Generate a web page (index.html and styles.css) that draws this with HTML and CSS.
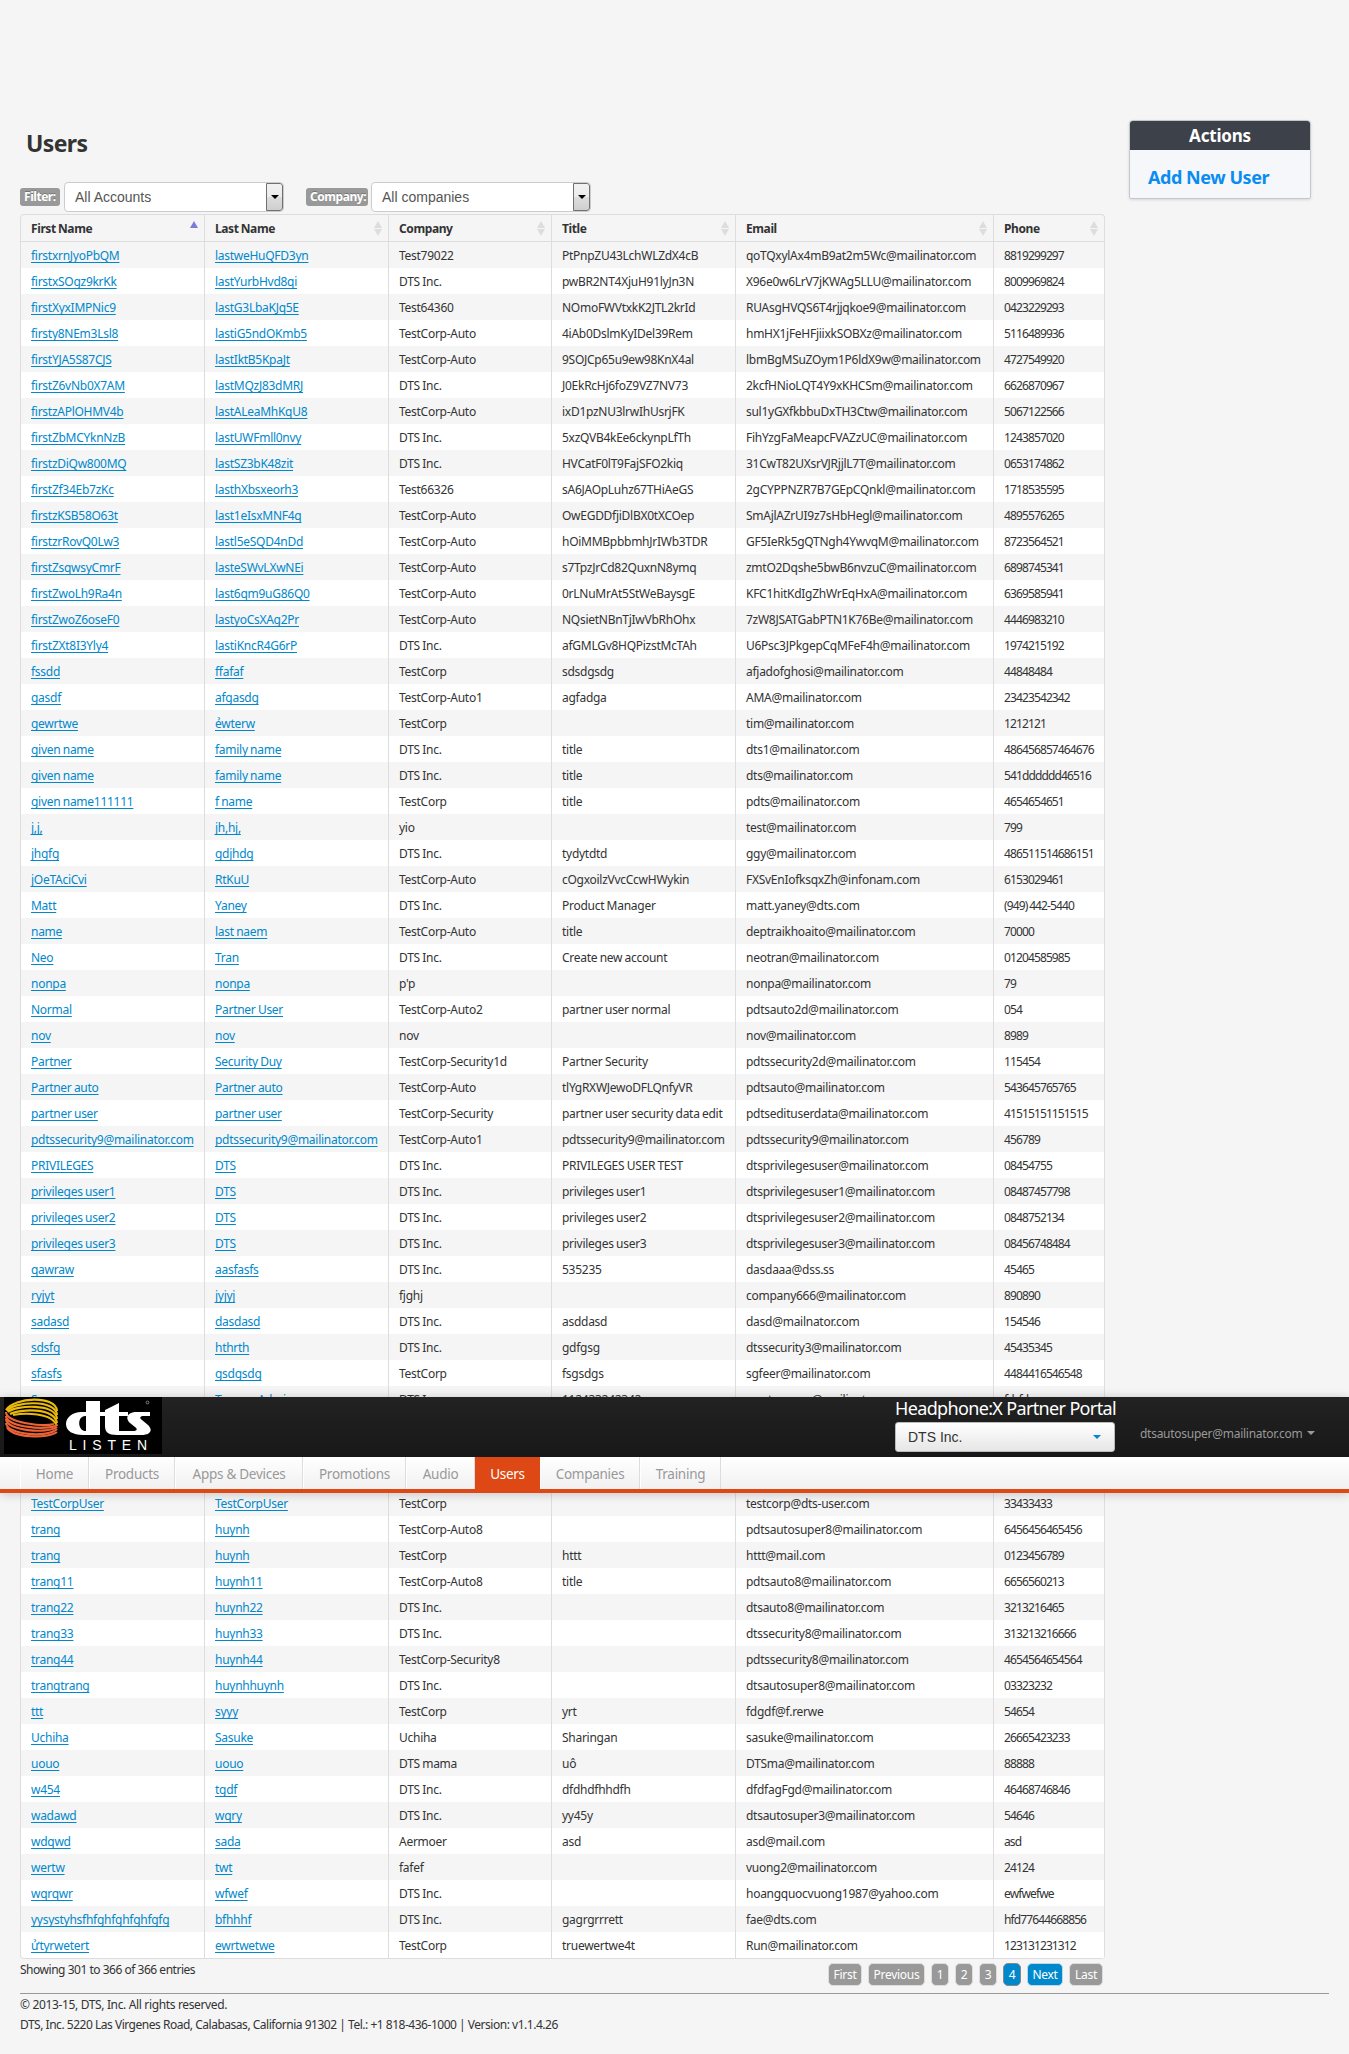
FILE: index.html
```html
<!DOCTYPE html>
<html lang="en">
<head>
<meta charset="utf-8">
<title>Users - Headphone:X Partner Portal</title>
<link rel="stylesheet" href="styles.css">
</head>
<body>
<header class="site-header">
  <div class="topbar">
    <svg class="logo" width="158" height="57" viewBox="0 0 158 57" role="img" aria-label="DTS Listen">
      <rect width="158" height="57" fill="#000"/>
      <g fill="none" stroke-width="2.2">
        <g stroke="#e9b90c">
          <path d="M2 13C10 0 52-2 53 14"/>
          <path d="M3 14C10 4 52 2 53 18"/>
          <path d="M4 15C12 8 52 6 53 22"/>
          <path d="M6 17C16 12 50 10 53 26"/>
          <path d="M9 18C20 16 48 15 53 29"/>
        </g>
        <g stroke="#ea6236">
          <path d="M2 15C2 26 40 30 50 27"/>
          <path d="M2 19C2 30 44 34 53 28"/>
          <path d="M2 22C2 34 44 37 53 30"/>
          <path d="M2 26C3 38 44 41 53 32"/>
          <path d="M3 30C8 41 44 42 53 35"/>
        </g>
      </g>
      <g fill="#fff" fill-rule="evenodd">
        <path d="M82 4h14v34H79c-10 0-17-4-17-11s7-12 15-12h5zM82 19c-9-1-9 15 0 15z"/>
        <path d="M101 13l14-7v9h9v4h-9v15h6v4h-8c-9 0-12-3-12-9V19h-6v-4h6z"/>
        <path d="M146 15v4h-6c-4 0-5 2-2 4l6 5c6 6 1 10-6 10h-17v-4h8c4 0 5-2 2-4l-5-4c-6-6-1-11 6-11z"/>
      </g>
      <circle cx="143.500" cy="5.500" r="1.400" fill="none" stroke="#aaa" stroke-width=".7"/>
      <text class="logo-word" x="65" y="53" textLength="78">LISTEN</text>
    </svg>
    <div class="portal">
      <div class="portal-title">Headphone:X Partner Portal</div>
      <div class="portal-select"><span>DTS Inc.</span><i class="caret caret-blue"></i></div>
    </div>
    <div class="account"><span>dtsautosuper@mailinator.com</span><i class="caret"></i></div>
  </div>
  <nav class="nav">
    <a class="n-home">Home</a><a class="n-products">Products</a><a class="n-apps">Apps &amp; Devices</a><a class="n-promo">Promotions</a><a class="n-audio">Audio</a><a class="n-users active">Users</a><a class="n-companies">Companies</a><a class="n-training">Training</a>
  </nav>
</header>

<div class="page">
  <div class="columns">
    <main class="main">
      <h1>Users</h1>
      <div class="filters">
        <span class="label l-filter">Filter:</span>
        <div class="select"><span>All Accounts</span><b><i></i></b></div>
        <span class="label l-company">Company:</span>
        <div class="select"><span>All companies</span><b><i></i></b></div>
      </div>
      <table class="users">
        <colgroup><col class="c1"><col class="c2"><col class="c3"><col class="c4"><col class="c5"><col class="c6"></colgroup>
        <thead><tr>
          <th class="asc">First Name</th><th>Last Name</th><th>Company</th><th>Title</th><th>Email</th><th>Phone</th>
        </tr></thead>
        <tbody id="rows"></tbody>
      </table>
      <div class="table-footer">
        <div class="info">Showing 301 to 366 of 366 entries</div>
        <div class="pager">
          <a class="p-first">First</a><a class="p-prev">Previous</a><a class="p-num">1</a><a class="p-num">2</a><a class="p-num">3</a><a class="p-num current">4</a><a class="p-next on">Next</a><a class="p-last">Last</a>
        </div>
      </div>
    </main>
    <aside class="actions">
      <h2>Actions</h2>
      <a>Add New User</a>
    </aside>
  </div>
  <footer class="footer">
    <p class="copy">© 2013-15, DTS, Inc. All rights reserved.</p>
    <p class="addr">DTS, Inc. 5220 Las Virgenes Road, Calabasas, California 91302 | Tel.: +1 818-436-1000 | Version: v1.1.4.26</p>
  </footer>
</div>
<script src="users.js"></script>
</body>
</html>
```

FILE: users.js
```js
// One user per line: first name | last name | company | title | email | phone
const users = `
firstxrnJyoPbQM|lastweHuQFD3yn|Test79022|PtPnpZU43LchWLZdX4cB|qoTQxylAx4mB9at2m5Wc@mailinator.com|8819299297
firstxSOgz9krKk|lastYurbHvd8qi|DTS Inc.|pwBR2NT4XjuH91lyJn3N|X96e0w6LrV7jKWAg5LLU@mailinator.com|8009969824
firstXyxIMPNic9|lastG3LbaKJq5E|Test64360|NOmoFWVtxkK2JTL2krId|RUAsgHVQS6T4rjjqkoe9@mailinator.com|0423229293
firsty8NEm3Lsl8|lastiG5ndOKmb5|TestCorp-Auto|4iAb0DslmKyIDel39Rem|hmHX1jFeHFjiixkSOBXz@mailinator.com|5116489936
firstYJA5S87CJS|lastIktB5KpaJt|TestCorp-Auto|9SOJCp65u9ew98KnX4al|lbmBgMSuZOym1P6ldX9w@mailinator.com|4727549920
firstZ6vNb0X7AM|lastMQzJ83dMRJ|DTS Inc.|J0EkRcHj6foZ9VZ7NV73|2kcfHNioLQT4Y9xKHCSm@mailinator.com|6626870967
firstzAPlOHMV4b|lastALeaMhKqU8|TestCorp-Auto|ixD1pzNU3lrwIhUsrjFK|sul1yGXfkbbuDxTH3Ctw@mailinator.com|5067122566
firstZbMCYknNzB|lastUWFmll0nvy|DTS Inc.|5xzQVB4kEe6ckynpLfTh|FihYzgFaMeapcFVAZzUC@mailinator.com|1243857020
firstzDiQw800MQ|lastSZ3bK48zit|DTS Inc.|HVCatF0lT9FajSFO2kiq|31CwT82UXsrVJRjjlL7T@mailinator.com|0653174862
firstZf34Eb7zKc|lasthXbsxeorh3|Test66326|sA6JAOpLuhz67THiAeGS|2gCYPPNZR7B7GEpCQnkl@mailinator.com|1718535595
firstzKSB58O63t|last1eIsxMNF4q|TestCorp-Auto|OwEGDDfjiDlBX0tXCOep|SmAjlAZrUI9z7sHbHegl@mailinator.com|4895576265
firstzrRovQ0Lw3|lastl5eSQD4nDd|TestCorp-Auto|hOiMMBpbbmhJrIWb3TDR|GF5IeRk5gQTNgh4YwvqM@mailinator.com|8723564521
firstZsqwsyCmrF|lasteSWvLXwNEi|TestCorp-Auto|s7TpzJrCd82QuxnN8ymq|zmtO2Dqshe5bwB6nvzuC@mailinator.com|6898745341
firstZwoLh9Ra4n|last6qm9uG86Q0|TestCorp-Auto|0rLNuMrAt5StWeBaysgE|KFC1hitKdIgZhWrEqHxA@mailinator.com|6369585941
firstZwoZ6oseF0|lastyoCsXAg2Pr|TestCorp-Auto|NQsietNBnTjIwVbRhOhx|7zW8JSATGabPTN1K76Be@mailinator.com|4446983210
firstZXt8I3Yly4|lastiKncR4G6rP|DTS Inc.|afGMLGv8HQPizstMcTAh|U6Psc3JPkgepCqMFeF4h@mailinator.com|1974215192
fssdd|ffafaf|TestCorp|sdsdgsdg|afjadofghosi@mailinator.com|44848484
gasdf|afgasdg|TestCorp-Auto1|agfadga|AMA@mailinator.com|23423542342
gewrtwe|ẻwterw|TestCorp||tim@mailinator.com|1212121
given name|family name|DTS Inc.|title|dts1@mailinator.com|486456857464676
given name|family name|DTS Inc.|title|dts@mailinator.com|541dddddd46516
given name111111|f name|TestCorp|title|pdts@mailinator.com|4654654651
j,j,|jh,hj,|yio||test@mailinator.com|799
jhgfg|gdjhdg|DTS Inc.|tydytdtd|ggy@mailinator.com|486511514686151
jOeTAciCvi|RtKuU|TestCorp-Auto|cOgxoilzVvcCcwHWykin|FXSvEnIofksqxZh@infonam.com|6153029461
Matt|Yaney|DTS Inc.|Product Manager|matt.yaney@dts.com|(949) 442-5440
name|last naem|TestCorp-Auto|title|deptraikhoaito@mailinator.com|70000
Neo|Tran|DTS Inc.|Create new account|neotran@mailinator.com|01204585985
nonpa|nonpa|p'p||nonpa@mailinator.com|79
Normal|Partner User|TestCorp-Auto2|partner user normal|pdtsauto2d@mailinator.com|054
nov|nov|nov||nov@mailinator.com|8989
Partner|Security Duy|TestCorp-Security1d|Partner Security|pdtssecurity2d@mailinator.com|115454
Partner auto|Partner auto|TestCorp-Auto|tlYgRXWJewoDFLQnfyVR|pdtsauto@mailinator.com|543645765765
partner user|partner user|TestCorp-Security|partner user security data edit|pdtsedituserdata@mailinator.com|41515151151515
pdtssecurity9@mailinator.com|pdtssecurity9@mailinator.com|TestCorp-Auto1|pdtssecurity9@mailinator.com|pdtssecurity9@mailinator.com|456789
PRIVILEGES|DTS|DTS Inc.|PRIVILEGES USER TEST|dtsprivilegesuser@mailinator.com|08454755
privileges user1|DTS|DTS Inc.|privileges user1|dtsprivilegesuser1@mailinator.com|08487457798
privileges user2|DTS|DTS Inc.|privileges user2|dtsprivilegesuser2@mailinator.com|0848752134
privileges user3|DTS|DTS Inc.|privileges user3|dtsprivilegesuser3@mailinator.com|08456748484
qawraw|aasfasfs|DTS Inc.|535235|dasdaaa@dss.ss|45465
ryjyt|jyjyj|fjghj||company666@mailinator.com|890890
sadasd|dasdasd|DTS Inc.|asddasd|dasd@mailnator.com|154546
sdsfg|hthrth|DTS Inc.|gdfgsg|dtssecurity3@mailinator.com|45435345
sfasfs|gsdgsdg|TestCorp|fsgsdgs|sgfeer@mailinator.com|4484416546548
Super|Tommy Admin|DTS Inc.|112433242342|cmstcomcm@mailinator.com|fdsfds
|||||
|||||
|||||
TestCorpUser|TestCorpUser|TestCorp||testcorp@dts-user.com|33433433
trang|huynh|TestCorp-Auto8||pdtsautosuper8@mailinator.com|6456456465456
trang|huynh|TestCorp|httt|httt@mail.com|0123456789
trang11|huynh11|TestCorp-Auto8|title|pdtsauto8@mailinator.com|6656560213
trang22|huynh22|DTS Inc.||dtsauto8@mailinator.com|3213216465
trang33|huynh33|DTS Inc.||dtssecurity8@mailinator.com|313213216666
trang44|huynh44|TestCorp-Security8||pdtssecurity8@mailinator.com|4654564654564
trangtrang|huynhhuynh|DTS Inc.||dtsautosuper8@mailinator.com|03323232
ttt|syyy|TestCorp|yrt|fdgdf@f.rerwe|54654
Uchiha|Sasuke|Uchiha|Sharingan|sasuke@mailinator.com|26665423233
uouo|uouo|DTS mama|uô|DTSma@mailinator.com|88888
w454|tgdf|DTS Inc.|dfdhdfhhdfh|dfdfagFgd@mailinator.com|46468746846
wadawd|wqry|DTS Inc.|yy45y|dtsautosuper3@mailinator.com|54646
wdqwd|sada|Aermoer|asd|asd@mail.com|asd
wertw|twt|fafef||vuong2@mailinator.com|24124
wqrqwr|wfwef|DTS Inc.||hoangquocvuong1987@yahoo.com|ewfwefwe
yysystyhsfhfghfghfghfgfg|bfhhhf|DTS Inc.|gagrgrrrett|fae@dts.com|hfd77644668856
ửtyrwetert|ewrtwetwe|TestCorp|truewertwe4t|Run@mailinator.com|123131231312
`.trim().split("\n").map(line => line.split("|"));

const body = document.getElementById("rows");
for (const user of users) {
  const row = body.insertRow();
  user.forEach((value, i) => {
    const cell = row.insertCell();
    if (i < 2 && value) {
      const link = document.createElement("a");
      link.textContent = value;
      cell.append(link);
    } else {
      cell.textContent = value;
    }
  });
}
```

FILE: styles.css
```css
* { box-sizing: border-box; }
body {
  margin: 0;
  height: 2054px;
  position: relative;
  background: #f5f5f5;
  color: #333;
  font: 12px/18px "Noto Sans", sans-serif;
  letter-spacing: -.27px;
}
.page { padding: 120px 20px 0; }
.columns { display: flex; justify-content: space-between; align-items: flex-start; }
.main { width: 1085px; }
h1 { margin: 7px 0 0 6px; height: 55px; font-size: 23px; line-height: 32px; letter-spacing: -.6px; }

.filters { display: flex; align-items: center; height: 30px; }
.label {
  height: 18px; padding: 0 4px; border-radius: 3px; background: #999; color: #fff;
  font-weight: bold; line-height: 18px; letter-spacing: -.45px; white-space: nowrap;
  text-shadow: 0 -1px 0 rgba(0,0,0,.25);
}
.l-filter { width: 40px; margin-right: 4px; }
.l-company { width: 62px; margin: 0 3px 0 22px; }
.select {
  display: flex; width: 220px; height: 30px; border: 1px solid #ccc; border-radius: 4px;
  background: #fff; color: #555; font: 14px/28px "Liberation Sans", sans-serif; letter-spacing: 0; overflow: hidden;
}
.select span { flex: 1; padding-left: 10px; }
.select b {
  display: flex; align-items: center; justify-content: center; width: 17px;
  border: 1px solid #707070; border-radius: 0 3px 3px 0;
  background: linear-gradient(#f2f2f2, #ebebeb 50%, #ddd 50%, #cfcfcf);
}
.select i { border: 4px solid transparent; border-top-color: #000; border-bottom: 0; }

.users {
  width: 1085px; margin-top: 2px; table-layout: fixed; border-collapse: separate; border-spacing: 0;
  border: 1px solid #ddd; border-left: 0; border-radius: 4px;
}
.c1 { width: 184px; } .c2 { width: 184px; } .c3 { width: 163px; }
.c4 { width: 184px; } .c5 { width: 258px; } .c6 { width: 111px; }
.users th, .users td {
  height: 26px; padding: 5px 0 3px 10px; border-left: 1px solid #ddd;
  text-align: left; white-space: nowrap; line-height: 18px; word-spacing: -.5px;
}
.users th { height: 27px; position: relative; border-bottom: 1px solid #ddd; letter-spacing: -.4px; }
.users th:first-child { border-top-left-radius: 4px; }
.users tr:last-child td:first-child { border-bottom-left-radius: 4px; }
.users tbody tr:nth-child(even) td { background: #fff; }
.users td:last-child { letter-spacing: -.88px; }
.users a { color: #08c; text-decoration: underline; text-underline-offset: 2px; text-decoration-skip-ink: none; }
th::before, th::after { content: ""; position: absolute; right: 6px; border: 4px solid transparent; }
th::before { top: 6px; border-top: 0; border-bottom: 7px solid #ddd; }
th::after { top: 14px; border-bottom: 0; border-top: 7px solid #ddd; }
th.asc::before { border-bottom-color: #7b7bdb; }
th.asc::after { display: none; }

.table-footer { display: flex; justify-content: space-between; height: 34px; }
.info { padding-top: 2px; letter-spacing: -.48px; }
.pager { display: flex; gap: 6px; padding: 4px 2px 0 0; }
.pager a {
  height: 23px; border: 1px solid #ddd; border-radius: 5px; background: #999; color: #fff;
  text-align: center; line-height: 21px;
}
.p-first, .p-last { width: 34px; }
.p-prev { width: 57px; }
.p-num { width: 18px; }
.pager .p-next { width: 36px; background: #08c; border-color: #bbd8e6; }
.pager .current { background: #08c; border-color: #888; }

.actions {
  width: 182px; height: 79px; margin-right: 18px; border: 1px solid #c4c7cb; border-radius: 4px 4px 2px 2px;
  background: #f5f7fb; box-shadow: 0 1px 3px rgba(0,0,0,.12); overflow: hidden;
}
.actions h2 {
  margin: 0; height: 29px; background: #3d414a; color: #fff; font-size: 17px; line-height: 30px;
  letter-spacing: -.2px; text-align: center;
}
.actions a {
  display: block; padding: 16px 0 0 18px; color: #0a8cf0; font-size: 18px; font-weight: bold;
  line-height: 22px; letter-spacing: -.45px;
}

.footer { border-top: 1px solid #999; padding-top: 1px; }
.footer p { margin: 0; line-height: 20px; letter-spacing: -.48px; white-space: nowrap; }
.footer .copy { letter-spacing: -.35px; }

/* Bar pinned over the scrolled list */
.site-header {
  position: absolute; top: 1397px; left: 0; right: 0; height: 96px;
  border-bottom: 4px solid #dd4814; box-shadow: 0 1px 10px rgba(0,0,0,.2);
}
.topbar { display: flex; height: 60px; background: linear-gradient(#222, #181818); }
.logo { margin-left: 4px; }
.logo-word { fill: #fff; font: 14px "Liberation Sans", sans-serif; letter-spacing: 0; }
.portal { width: 220px; margin-left: 733px; }
.portal-title { height: 25px; color: #fff; font-size: 18px; line-height: 23px; letter-spacing: -.65px; white-space: nowrap; }
.portal-select {
  display: flex; align-items: center; justify-content: space-between; height: 30px; padding: 0 13px 0 12px;
  border: 1px solid #bbb; border-radius: 3px; background: linear-gradient(#fff, #e6e6e6);
  font: 14px/28px "Liberation Sans", sans-serif; letter-spacing: 0;
}
.caret { border: 4px solid transparent; border-top-color: #999; border-bottom: 0; }
.caret-blue { border-top-color: #08c; }
.account { display: flex; gap: 5px; margin-left: 25px; padding-top: 28px; color: #999; }
.account .caret { margin-top: 6px; height: 4px; }
.nav { display: flex; height: 32px; padding-left: 20px; background: linear-gradient(#fff, #f1f1f1); }
.nav a {
  border-right: 1px solid #ddd; border-left: 1px solid #fff; color: #999;
  font-size: 13.5px; line-height: 34px; text-align: center; white-space: nowrap;
}
.n-home { width: 69px; } .n-products { width: 86px; } .n-apps { width: 128px; } .n-promo { width: 103px; }
.n-audio { width: 69px; } .n-users { width: 65px; } .n-companies { width: 100px; } .n-training { width: 81px; }
.nav .active { background: #dd4814; border-color: #dd4814; color: #fff; }
```
